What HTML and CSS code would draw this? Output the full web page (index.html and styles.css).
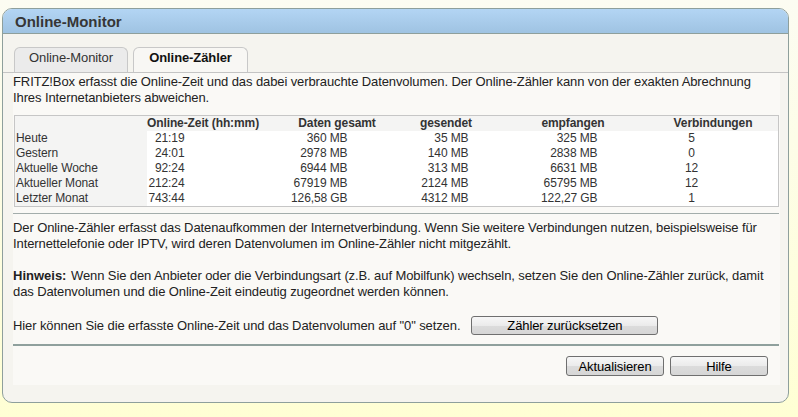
FILE: index.html
```html
<!DOCTYPE html>
<html lang="de">
<head>
<meta charset="utf-8">
<title>Online-Monitor</title>
<link rel="stylesheet" href="styles.css">
</head>
<body>
<div class="box">
  <div class="head">Online-Monitor</div>
  <div class="tabs">
    <div class="tab">Online-Monitor</div>
    <div class="tab active">Online-Zähler</div>
  </div>
  <div class="content">
    <p class="intro">FRITZ!Box erfasst die Online-Zeit und das dabei verbrauchte Datenvolumen. Der Online-Zähler kann von der exakten Abrechnung Ihres Internetanbieters abweichen.</p>
    <table class="stats">
      <colgroup>
        <col class="c1"><col class="c2"><col class="c3"><col class="c4"><col class="c5"><col class="c6"><col>
      </colgroup>
      <thead>
        <tr><th></th><th>Online-Zeit (hh:mm)</th><th>Daten gesamt</th><th>gesendet</th><th>empfangen</th><th>Verbindungen</th><th></th></tr>
      </thead>
      <tbody>
        <tr><td class="lbl">Heute</td><td class="t">21:19</td><td class="d">360 MB</td><td class="s">35 MB</td><td class="r">325 MB</td><td class="v">5</td><td></td></tr>
        <tr><td class="lbl">Gestern</td><td class="t">24:01</td><td class="d">2978 MB</td><td class="s">140 MB</td><td class="r">2838 MB</td><td class="v">0</td><td></td></tr>
        <tr><td class="lbl">Aktuelle Woche</td><td class="t">92:24</td><td class="d">6944 MB</td><td class="s">313 MB</td><td class="r">6631 MB</td><td class="v">12</td><td></td></tr>
        <tr><td class="lbl">Aktueller Monat</td><td class="t">212:24</td><td class="d">67919 MB</td><td class="s">2124 MB</td><td class="r">65795 MB</td><td class="v">12</td><td></td></tr>
        <tr><td class="lbl">Letzter Monat</td><td class="t">743:44</td><td class="d">126,58 GB</td><td class="s">4312 MB</td><td class="r">122,27 GB</td><td class="v">1</td><td></td></tr>
      </tbody>
    </table>
    <hr class="sep thin">
    <p class="p2">Der Online-Zähler erfasst das Datenaufkommen der Internetverbindung. Wenn Sie weitere Verbindungen nutzen, beispielsweise für Internettelefonie oder IPTV, wird deren Datenvolumen im Online-Zähler nicht mitgezählt.</p>
    <p class="p3"><b class="note">Hinweis:</b> Wenn Sie den Anbieter oder die Verbindungsart (z.B. auf Mobilfunk) wechseln, setzen Sie den Online-Zähler zurück, damit das Datenvolumen und die Online-Zeit eindeutig zugeordnet werden können.</p>
    <div class="reset">
      <span>Hier können Sie die erfasste Online-Zeit und das Datenvolumen auf "0" setzen.</span>
      <button class="btn wide">Zähler zurücksetzen</button>
    </div>
    <hr class="sep thick">
    <div class="actions">
      <button class="btn">Aktualisieren</button>
      <button class="btn">Hilfe</button>
    </div>
  </div>
</div>
</body>
</html>
```

FILE: styles.css
```css
html, body {
  margin: 0;
  padding: 0;
}
body {
  width: 798px;
  height: 417px;
  overflow: hidden;
  background: linear-gradient(#fcfcf2, #ffffd4);
  font-family: "Liberation Sans", Arial, sans-serif;
  font-size: 13px;
  letter-spacing: -0.1px;
  color: #222;
  padding-top: 8px;
  box-sizing: border-box;
}
.box {
  margin-left: 2px;
  width: 787px;
  height: 395px;
  box-sizing: border-box;
  border: 1px solid #8e9f9c;
  border-radius: 10px;
  background: #f5f4ef;
  overflow: hidden;
}
.head {
  box-sizing: border-box;
  height: 25px;
  padding: 2px 0 0 12px;
  line-height: 22px;
  font-size: 15px;
  font-weight: bold;
  letter-spacing: 0;
  color: #363636;
  background: linear-gradient(#b3d5f4, #9fc3e2);
  border-bottom: 1px solid #8e9f9c;
}
.tabs {
  display: flex;
  align-items: flex-end;
  gap: 5px;
  padding: 13px 0 0 11px;
  border-bottom: 1px solid #c4c4c4;
}
.tab {
  width: 114px;
  height: 25px;
  box-sizing: border-box;
  border: 1px solid #c8c8c8;
  border-bottom: none;
  border-radius: 6px 6px 0 0;
  background: #ebebeb;
  text-align: center;
  line-height: 20px;
  color: #333;
}
.tab.active {
  width: 115px;
  background: #f8f7f4;
  font-weight: bold;
  color: #111;
}
.content {
  margin: 0 8px 0 10px;
  padding: 1px 0 9px;
  background: #faf9f6;
}
p {
  margin: 0;
  line-height: 16px;
}
.intro {
  margin-bottom: 9px;
}
.stats {
  margin-left: 1px;
  width: 765px;
  table-layout: fixed;
  border-collapse: collapse;
  border: 1px solid #c6c6c6;
  font-size: 12px;
  color: #333;
  background: #fff;
}
.c1 { width: 132px; }
.c2 { width: 113px; }
.c3 { width: 155px; }
.c4 { width: 63px; }
.c5 { width: 191px; }
.c6 { width: 89px; }
.stats th, .stats td {
  padding: 0;
  height: 15px;
  line-height: 15px;
  white-space: nowrap;
}
.stats th {
  background: #f4f4f3;
  font-weight: bold;
  text-align: center;
  color: #333;
}
.stats td.lbl {
  background: #f4f4f3;
  padding-left: 1px;
  text-align: left;
}
.stats td.t { text-align: right; padding-right: 75px; }
.stats td.d { text-align: right; padding-right: 67px; }
.stats td.s { text-align: right; padding-right: 9px; }
.stats td.r { text-align: right; padding-right: 71px; }
.stats td.v { text-align: center; padding-right: 43px; }
.sep {
  border: none;
  margin: 0;
  width: 766px;
}
.sep.thin {
  margin-top: 6px;
  height: 1px;
  background: #a3adab;
}
.sep.thick {
  margin-top: 9px;
  height: 2px;
  background: #8fa09d;
}
.p2 {
  margin-top: 6px;
}
.p3 {
  margin-top: 16px;
}
.note {
  color: #222;
  letter-spacing: 0;
  margin-right: 1px;
}
.reset {
  margin-top: 16px;
  display: flex;
  align-items: center;
  height: 19px;
}
.btn {
  font-family: "Liberation Sans", Arial, sans-serif;
  font-size: 13px;
  letter-spacing: -0.1px;
  color: #000;
  height: 20px;
  padding: 0;
  border: 1px solid #6f6f6f;
  border-radius: 3px;
  background: linear-gradient(#f7f7f7 0%, #ebebeb 50%, #dcdcdc 51%, #d6d6d6 100%);
  line-height: 17px;
  box-sizing: border-box;
  width: 98px;
}
.btn.wide {
  margin-left: 11px;
  width: 187px;
  height: 19px;
}
.actions {
  margin-top: 10px;
  display: flex;
  justify-content: flex-end;
  gap: 6px;
  padding-right: 12px;
}
```
